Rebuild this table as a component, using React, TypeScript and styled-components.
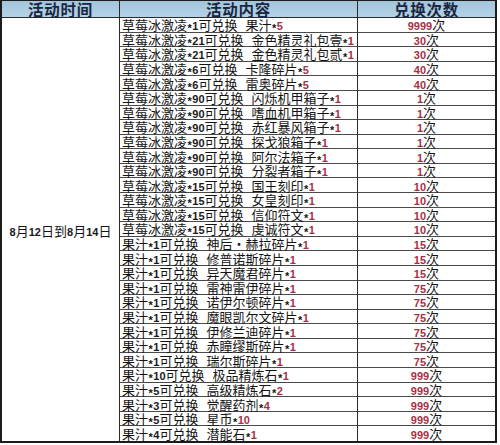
import React from "react";
import styled, { createGlobalStyle } from "styled-components";

const GlobalStyle = createGlobalStyle`
  body {
    margin: 0;
    background: #ffffff;
  }
`;

const Table = styled.div`
  display: grid;
  grid-template-columns: 118px 238px 1fr;
  grid-template-rows: 17px repeat(29, minmax(0, 1fr));
  width: 497px;
  height: 443px;
  box-sizing: border-box;
  border: 2px solid #1c1c1c;
  border-top-width: 1px;
  font-family: "Noto Sans CJK SC", sans-serif;
  font-size: 13px;
  color: #141414;
`;

const HeadCell = styled.div<{ $last?: boolean }>`
  display: flex;
  align-items: center;
  justify-content: center;
  background: linear-gradient(#a2c6de, #b4d2e6);
  border-bottom: 1px solid #2a2a2a;
  border-right: ${({ $last }) => ($last ? "none" : "1px solid #2a2a2a")};
  font-size: 15.5px;
  font-weight: 700;
  color: #1a2740;
  line-height: 16px;
  letter-spacing: 0.8px;
`;

const DateCell = styled.div`
  grid-row: 2 / span 29;
  display: flex;
  align-items: center;
  justify-content: center;
  border-right: 1px solid #2a2a2a;
  padding-top: 2px;
`;

const Cell = styled.div<{ $center?: boolean; $last?: boolean }>`
  display: flex;
  align-items: center;
  justify-content: ${({ $center }) => ($center ? "center" : "flex-start")};
  min-height: 0;
  padding-left: ${({ $center }) => ($center ? "0" : "2px")};
  border-bottom: ${({ $last }) => ($last ? "none" : "1px solid #4a4a4a")};
  border-right: ${({ $center }) => ($center ? "none" : "1px solid #2a2a2a")};
  white-space: nowrap;
`;

const Line = styled.span`
  display: block;
  height: 13px;
  line-height: 13px;
`;

const Digit = styled.span<{ $red?: boolean }>`
  font-family: "Liberation Sans", Arial, sans-serif;
  font-weight: 700;
  font-size: 11px;
  color: ${({ $red }) => ($red ? "#a82f45" : "#1a1a1a")};
`;

const Star = styled.span`
  font-family: "Liberation Sans", Arial, sans-serif;
  font-weight: 700;
  font-size: 11px;
  vertical-align: -2px;
  margin: 0 0.5px;
`;

const Gap = styled.span`
  display: inline-block;
  width: 8px;
`;

type Row = [string, string, string, string];

const ROWS: Row[] = [
  ["草莓冰激凌*1可兑换", "果汁", "5", "9999"],
  ["草莓冰激凌*21可兑换", "金色精灵礼包壹", "1", "30"],
  ["草莓冰激凌*21可兑换", "金色精灵礼包贰", "1", "30"],
  ["草莓冰激凌*6可兑换", "卡隆碎片", "5", "40"],
  ["草莓冰激凌*6可兑换", "雷奥碎片", "5", "40"],
  ["草莓冰激凌*90可兑换", "闪烁机甲箱子", "1", "1"],
  ["草莓冰激凌*90可兑换", "嗜血机甲箱子", "1", "1"],
  ["草莓冰激凌*90可兑换", "赤红暴风箱子", "1", "1"],
  ["草莓冰激凌*90可兑换", "探戈狼箱子", "1", "1"],
  ["草莓冰激凌*90可兑换", "阿尔法箱子", "1", "1"],
  ["草莓冰激凌*90可兑换", "分裂者箱子", "1", "1"],
  ["草莓冰激凌*15可兑换", "国王刻印", "1", "10"],
  ["草莓冰激凌*15可兑换", "女皇刻印", "1", "10"],
  ["草莓冰激凌*15可兑换", "信仰符文", "1", "10"],
  ["草莓冰激凌*15可兑换", "虔诚符文", "1", "10"],
  ["果汁*1可兑换", "神后・赫拉碎片", "1", "15"],
  ["果汁*1可兑换", "修普诺斯碎片", "1", "15"],
  ["果汁*1可兑换", "异天魔君碎片", "1", "15"],
  ["果汁*1可兑换", "雷神雷伊碎片", "1", "75"],
  ["果汁*1可兑换", "诺伊尔顿碎片", "1", "75"],
  ["果汁*1可兑换", "魔眼凯尔文碎片", "1", "75"],
  ["果汁*1可兑换", "伊修兰迪碎片", "1", "75"],
  ["果汁*1可兑换", "赤瞳缪斯碎片", "1", "75"],
  ["果汁*1可兑换", "瑞尔斯碎片", "1", "75"],
  ["果汁*10可兑换", "极品精炼石", "1", "999"],
  ["果汁*5可兑换", "高级精炼石", "2", "999"],
  ["果汁*3可兑换", "觉醒药剂", "4", "999"],
  ["果汁*5可兑换", "星币", "10", "999"],
  ["果汁*4可兑换", "潜能石", "1", "999"],
];

// digits and asterisks get the narrow latin face, the rest stays CJK
const mixed = (text: string) =>
  text.split(/(\d+|\*)/).map((part, i) => {
    if (part === "*") return <Star key={i}>*</Star>;
    if (/^\d+$/.test(part)) return <Digit key={i}>{part}</Digit>;
    return <span key={i}>{part}</span>;
  });

export default function App() {
  return (
    <>
      <GlobalStyle />
      <Table>
        <HeadCell>活动时间</HeadCell>
        <HeadCell>活动内容</HeadCell>
        <HeadCell $last>兑换次数</HeadCell>
        <DateCell>
          <Line>{mixed("8月12日到8月14日")}</Line>
        </DateCell>
        {ROWS.map(([cost, item, qty, limit], i) => {
          const last = i === ROWS.length - 1;
          return (
            <React.Fragment key={i}>
              <Cell $last={last}>
                <Line>
                  {mixed(cost)}
                  <Gap />
                  {item}
                  <Star>*</Star>
                  <Digit $red>{qty}</Digit>
                </Line>
              </Cell>
              <Cell $center $last={last}>
                <Line>
                  <Digit $red>{limit}</Digit>次
                </Line>
              </Cell>
            </React.Fragment>
          );
        })}
      </Table>
    </>
  );
}
